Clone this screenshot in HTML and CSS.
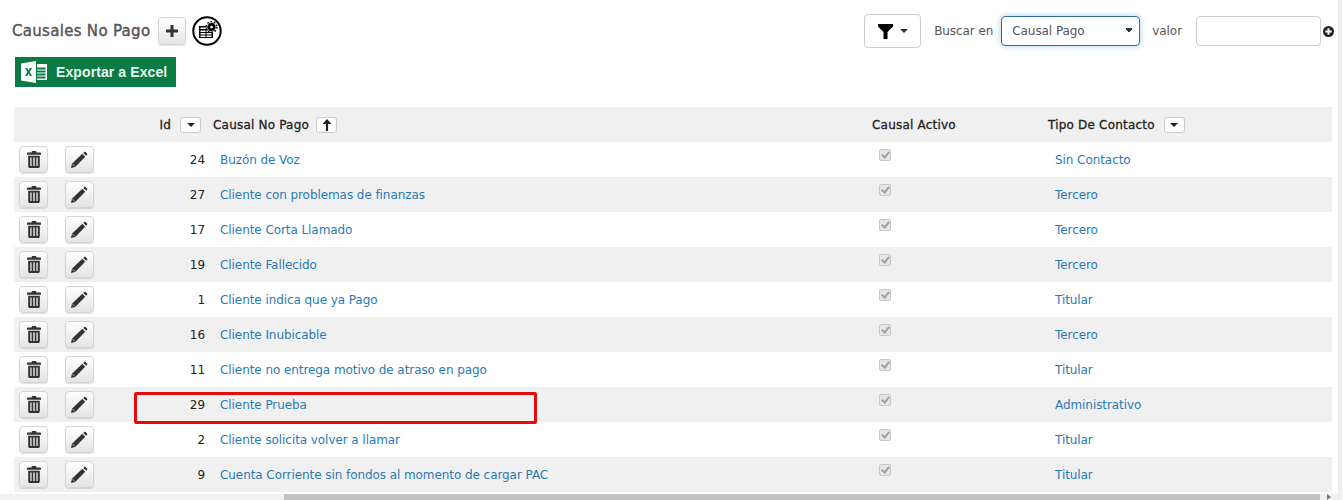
FILE: index.html
```html
<!DOCTYPE html>
<html lang="en">
<head>
  <meta charset="UTF-8" />
  <title>Causales No Pago</title>
  <link rel="stylesheet" href="styles.css">
</head>
<body>
  <svg class="defs" width="0" height="0">
    <symbol id="trash" viewBox="0 0 14 17">
      <path d="M5 0h4l.5 1.500H13c.6 0 1 .4 1 1v1.200H0V2.500c0-.6.4-1 1-1h3.500z"/>
      <path fill-rule="evenodd" d="M1.200 4.700h11.600v10.800c0 .8-.7 1.500-1.500 1.500H2.700c-.8 0-1.500-.7-1.500-1.500zM3.300 6.500v8.500h1.300V6.500zm3 0v8.500h1.400V6.500zm3.100 0v8.500h1.300V6.500z"/>
    </symbol>
    <symbol id="pencil" viewBox="0 0 18 18">
      <path d="M0 18l1-4.500L12 3l3 3L4.500 17zM13 2l1-1c.4-.4 1-.4 1.400 0l1.600 1.600c.4.4.4 1 0 1.400l-1 1z"/>
      <path d="M1.600 13.800l2.600 2.600" stroke="#eee" stroke-width=".7" fill="none"/>
    </symbol>
    <symbol id="caret" viewBox="0 0 8 4">
      <path d="M0 0h8L4 4z"/>
    </symbol>
  </svg>

  <div class="page">
    <div class="content">
      <div class="toolbar">
        <div class="title-group">
          <h1>Causales No Pago</h1>
          <button class="btn btn-add">
            <svg width="12" height="12" viewBox="0 0 12 12"><path d="M4.500 0h3v4.500H12v3H7.500V12h-3V7.500H0v-3h4.500z"/></svg>
          </button>
          <span class="grid-config">
            <svg width="30" height="30" viewBox="0 0 30 30">
              <circle cx="15" cy="15" r="13.700" fill="#fff" stroke="#000" stroke-width="2"/>
              <path d="M7 10h10v3h4v9H7z" fill="#000"/>
              <path d="M8.500 14.500h5v1.500h-5zm6 0h5v1.500h-5zm-6 2.500h5v1.500h-5zm6 0h5v1.500h-5zm-6 2.500h5V21h-5zm6 0h5V21h-5zm-6-8h8v1.500h-8z" fill="#fff"/>
              <circle cx="19.500" cy="11" r="4.500" fill="#000" stroke="#fff" stroke-width=".6"/>
              <circle cx="19.500" cy="11" r="5.400" fill="none" stroke="#000" stroke-width="1.400" stroke-dasharray="1.700 1.700"/>
              <circle cx="19.500" cy="11" r="1.300" fill="#fff"/>
            </svg>
          </span>
        </div>
        <div class="search-group">
          <button class="btn-filter">
            <svg width="15" height="15" viewBox="0 0 15 15"><path d="M0 0h15v2.500L9.500 8v7h-4V8L0 2.500z"/></svg>
            <svg class="caret" width="8" height="4"><use href="#caret"/></svg>
          </button>
          <label class="search-label">Buscar en</label>
          <select class="search-select">
            <option>Causal Pago</option>
          </select>
          <label class="search-label">valor</label>
          <input class="search-input" type="text" />
          <svg class="search-add" width="11" height="11" viewBox="0 0 11 11"><circle cx="5.500" cy="5.500" r="5.500"/><path d="M4.500 2.300h2v2.200h2.200v2H6.500v2.200h-2V6.500H2.300v-2h2.200z" fill="#fff"/></svg>
        </div>
      </div>

      <a class="btn-excel" href="#">
        <svg width="27" height="22" viewBox="0 0 27 22">
          <path d="M0 2.500 15 0v22L0 19.500z" fill="#fff"/>
          <path d="M16 3h10v16H16v-1.500h8.500v-2H16v-1h8.500v-2H16v-1h8.500v-2H16v-1h8.500v-2H16z" fill="#fff"/>
          <path d="M4 7h2.200l1.300 2.500L8.800 7H11L8.700 11l2.400 4H8.900l-1.400-2.600L6.100 15H4l2.400-4z" fill="#0a7b45"/>
        </svg>
        Exportar a Excel
      </a>

      <table class="grid">
        <colgroup>
          <col class="col-del"><col class="col-edit"><col class="col-id"><col class="col-causal"><col class="col-activo"><col class="col-tipo">
        </colgroup>
        <thead>
          <tr>
            <th></th>
            <th></th>
            <th class="th-id">Id <button class="sort"><svg width="8" height="4"><use href="#caret"/></svg></button></th>
            <th>Causal No Pago <button class="sort sort-active"><svg width="10" height="12" viewBox="0 0 10 12"><path d="M5 0l4.500 5H6.100v7H3.900V5H.5z"/></svg></button></th>
            <th class="th-activo">Causal Activo</th>
            <th>Tipo De Contacto <button class="sort"><svg width="8" height="4"><use href="#caret"/></svg></button></th>
          </tr>
        </thead>
        <tbody>
          <tr>
            <td><button class="btn btn-row"><svg width="14" height="17"><use href="#trash"/></svg></button></td>
            <td><button class="btn btn-row"><svg width="17" height="17"><use href="#pencil"/></svg></button></td>
            <td class="cell-id">24</td>
            <td class="cell-link"><a href="#">Buzón de Voz</a></td>
            <td class="cell-check"><input type="checkbox" checked disabled></td>
            <td class="cell-link"><a href="#">Sin Contacto</a></td>
          </tr>
          <tr>
            <td><button class="btn btn-row"><svg width="14" height="17"><use href="#trash"/></svg></button></td>
            <td><button class="btn btn-row"><svg width="17" height="17"><use href="#pencil"/></svg></button></td>
            <td class="cell-id">27</td>
            <td class="cell-link"><a href="#">Cliente con problemas de finanzas</a></td>
            <td class="cell-check"><input type="checkbox" checked disabled></td>
            <td class="cell-link"><a href="#">Tercero</a></td>
          </tr>
          <tr>
            <td><button class="btn btn-row"><svg width="14" height="17"><use href="#trash"/></svg></button></td>
            <td><button class="btn btn-row"><svg width="17" height="17"><use href="#pencil"/></svg></button></td>
            <td class="cell-id">17</td>
            <td class="cell-link"><a href="#">Cliente Corta Llamado</a></td>
            <td class="cell-check"><input type="checkbox" checked disabled></td>
            <td class="cell-link"><a href="#">Tercero</a></td>
          </tr>
          <tr>
            <td><button class="btn btn-row"><svg width="14" height="17"><use href="#trash"/></svg></button></td>
            <td><button class="btn btn-row"><svg width="17" height="17"><use href="#pencil"/></svg></button></td>
            <td class="cell-id">19</td>
            <td class="cell-link"><a href="#">Cliente Fallecido</a></td>
            <td class="cell-check"><input type="checkbox" checked disabled></td>
            <td class="cell-link"><a href="#">Tercero</a></td>
          </tr>
          <tr>
            <td><button class="btn btn-row"><svg width="14" height="17"><use href="#trash"/></svg></button></td>
            <td><button class="btn btn-row"><svg width="17" height="17"><use href="#pencil"/></svg></button></td>
            <td class="cell-id">1</td>
            <td class="cell-link"><a href="#">Cliente indica que ya Pago</a></td>
            <td class="cell-check"><input type="checkbox" checked disabled></td>
            <td class="cell-link"><a href="#">Titular</a></td>
          </tr>
          <tr>
            <td><button class="btn btn-row"><svg width="14" height="17"><use href="#trash"/></svg></button></td>
            <td><button class="btn btn-row"><svg width="17" height="17"><use href="#pencil"/></svg></button></td>
            <td class="cell-id">16</td>
            <td class="cell-link"><a href="#">Cliente Inubicable</a></td>
            <td class="cell-check"><input type="checkbox" checked disabled></td>
            <td class="cell-link"><a href="#">Tercero</a></td>
          </tr>
          <tr>
            <td><button class="btn btn-row"><svg width="14" height="17"><use href="#trash"/></svg></button></td>
            <td><button class="btn btn-row"><svg width="17" height="17"><use href="#pencil"/></svg></button></td>
            <td class="cell-id">11</td>
            <td class="cell-link"><a href="#">Cliente no entrega motivo de atraso en pago</a></td>
            <td class="cell-check"><input type="checkbox" checked disabled></td>
            <td class="cell-link"><a href="#">Titular</a></td>
          </tr>
          <tr>
            <td><button class="btn btn-row"><svg width="14" height="17"><use href="#trash"/></svg></button></td>
            <td><button class="btn btn-row"><svg width="17" height="17"><use href="#pencil"/></svg></button></td>
            <td class="cell-id">29</td>
            <td class="cell-link"><a href="#">Cliente Prueba</a></td>
            <td class="cell-check"><input type="checkbox" checked disabled></td>
            <td class="cell-link"><a href="#">Administrativo</a></td>
          </tr>
          <tr>
            <td><button class="btn btn-row"><svg width="14" height="17"><use href="#trash"/></svg></button></td>
            <td><button class="btn btn-row"><svg width="17" height="17"><use href="#pencil"/></svg></button></td>
            <td class="cell-id">2</td>
            <td class="cell-link"><a href="#">Cliente solicita volver a llamar</a></td>
            <td class="cell-check"><input type="checkbox" checked disabled></td>
            <td class="cell-link"><a href="#">Titular</a></td>
          </tr>
          <tr>
            <td><button class="btn btn-row"><svg width="14" height="17"><use href="#trash"/></svg></button></td>
            <td><button class="btn btn-row"><svg width="17" height="17"><use href="#pencil"/></svg></button></td>
            <td class="cell-id">9</td>
            <td class="cell-link"><a href="#">Cuenta Corriente sin fondos al momento de cargar PAC</a></td>
            <td class="cell-check"><input type="checkbox" checked disabled></td>
            <td class="cell-link"><a href="#">Titular</a></td>
          </tr>
        </tbody>
      </table>

      <div class="highlight"></div>
      <div class="hscroll">
        <div class="hscroll-thumb"></div>
        <div class="hscroll-arrow"></div>
      </div>
    </div>
    <div class="vscroll"></div>
  </div>
</body>
</html>
```

FILE: styles.css
```css
body, h1 {
  margin: 0;
  padding: 0;
}

body {
  font-family: 'DejaVu Sans', Tahoma, Verdana, sans-serif;
  font-size: 12px;
  letter-spacing: -0.07px;
  color: #333;
  background-color: #fff;
  height: 500px;
  overflow: hidden;
}

.defs {
  position: absolute;
}

.page {
  display: flex;
  height: 500px;
}

.content {
  position: relative;
  flex: 1;
  min-width: 0;
  padding-left: 14px;
  padding-right: 6px;
}

.vscroll {
  width: 5px;
  background-color: #f1f1f1;
  border-left: 1px solid #e8e8e8;
  box-sizing: border-box;
}

.toolbar {
  display: flex;
  justify-content: space-between;
  align-items: center;
  height: 34px;
  margin-top: 14px;
  margin-bottom: 9px;
}

.title-group {
  display: flex;
  align-items: center;
  margin-left: -2px;
}

h1 {
  font-size: 15px;
  font-weight: normal;
  letter-spacing: 0.3px;
  color: #555;
  -webkit-text-stroke: 0.4px #555;
}

.btn {
  display: inline-flex;
  align-items: center;
  justify-content: center;
  padding: 0;
  border: 1px solid #d4d4d4;
  border-radius: 4px;
  background: linear-gradient(#fff, #e4e4e4);
  box-shadow: 0 1px 1px rgba(0, 0, 0, 0.12);
}

.btn svg {
  fill: #333;
}

.btn-add {
  width: 28px;
  height: 28px;
  margin-left: 8px;
}

.grid-config {
  display: flex;
  margin-left: 6px;
}

.search-group {
  display: flex;
  align-items: center;
  margin-right: -2px;
}

.btn-filter {
  display: flex;
  align-items: center;
  justify-content: center;
  gap: 7px;
  width: 57px;
  height: 34px;
  padding: 0;
  background-color: #fff;
  border: 1px solid #ccc;
  border-radius: 4px;
}

.btn-filter .caret {
  fill: #333;
}

.search-label {
  color: #555;
  margin-left: 13px;
  margin-right: 8px;
}

.search-select {
  appearance: none;
  width: 139px;
  height: 30px;
  padding-left: 10px;
  font-family: inherit;
  font-size: 12px;
  letter-spacing: inherit;
  color: #555;
  border: 1px solid #2f6ea5;
  border-radius: 4px;
  box-shadow: 0 0 6px rgba(102, 175, 233, 0.6);
  background-color: #fff;
  background-image: linear-gradient(45deg, transparent 50%, #333 50%), linear-gradient(135deg, #333 50%, transparent 50%);
  background-size: 3px 6px;
  background-repeat: no-repeat;
  background-position: right 10px center, right 7px center;
}

.search-select + .search-label {
  margin-left: 12px;
  margin-right: 14px;
}

.search-input {
  width: 125px;
  height: 30px;
  box-sizing: border-box;
  border: 1px solid #ccc;
  border-radius: 4px;
}

.search-add {
  margin-left: 2px;
  fill: #222;
}

.btn-excel {
  display: flex;
  align-items: center;
  gap: 8px;
  width: 161px;
  height: 30px;
  box-sizing: border-box;
  margin-left: 1px;
  padding-left: 6px;
  background-color: #0a7b45;
  color: #e8f5ee;
  font-family: 'Liberation Sans', Arial, sans-serif;
  font-size: 14px;
  font-weight: bold;
  letter-spacing: 0.1px;
  text-decoration: none;
}

.grid {
  width: 100%;
  margin-top: 20px;
  border-collapse: collapse;
  table-layout: fixed;
}

.col-del { width: 46px; }
.col-edit { width: 60px; }
.col-id { width: 93px; }
.col-causal { width: 652px; }
.col-activo { width: 183px; }

.grid tr {
  height: 35px;
}

.grid thead tr,
.grid tbody tr:nth-child(even) {
  background-color: #f0f0f0;
}

.grid th {
  padding: 0;
  text-align: left;
  color: #222;
  font-weight: normal;
  letter-spacing: 0.2px;
  -webkit-text-stroke: 0.3px #222;
}

.grid th.th-id {
  text-align: right;
  padding-right: 12px;
}

.grid th.th-activo {
  padding-left: 7px;
}

.sort {
  display: inline-flex;
  align-items: center;
  justify-content: center;
  width: 21px;
  height: 16px;
  margin-left: 5px;
  padding: 0;
  background-color: #fff;
  border: 1px solid #ccc;
  border-radius: 3px;
  vertical-align: middle;
}

.sort-active {
  margin-left: 3px;
}

.sort svg {
  fill: #222;
}

.grid td {
  padding: 0;
}

.btn-row {
  width: 29px;
  height: 27px;
  margin-left: 5px;
  vertical-align: middle;
}

.cell-id {
  text-align: right;
  padding-right: 8px !important;
  color: #222;
}

.cell-link {
  padding-left: 7px !important;
}

.cell-link a {
  color: #2a7ab5;
  text-decoration: none;
}

.cell-check {
  vertical-align: top;
  padding-left: 14px !important;
}

.cell-check input {
  appearance: none;
  position: relative;
  display: block;
  width: 12px;
  height: 12px;
  margin: 7px 0 0;
  background-color: #e6e6e6;
  border: 1px solid #c8c8c8;
  border-radius: 2px;
}

.cell-check input::after {
  content: "";
  position: absolute;
  left: 3px;
  top: 0;
  width: 3px;
  height: 6px;
  border-right: 2px solid #a0a0a0;
  border-bottom: 2px solid #a0a0a0;
  transform: rotate(40deg);
}

.highlight {
  position: absolute;
  left: 134px;
  top: 392px;
  width: 403px;
  height: 32px;
  box-sizing: border-box;
  border: 3px solid #e30b0b;
  border-radius: 2px;
}

.hscroll {
  position: absolute;
  left: 0;
  right: 0;
  bottom: 0;
  display: flex;
  align-items: center;
  height: 6px;
  background-color: #f1f1f1;
}

.hscroll-thumb {
  flex: 1;
  height: 6px;
  margin-left: 284px;
  margin-right: 7px;
  background-color: #c1c1c1;
}

.hscroll-arrow {
  width: 0;
  height: 0;
  margin-right: 7px;
  border-top: 3px solid transparent;
  border-bottom: 3px solid transparent;
  border-left: 4px solid #777;
}
```
